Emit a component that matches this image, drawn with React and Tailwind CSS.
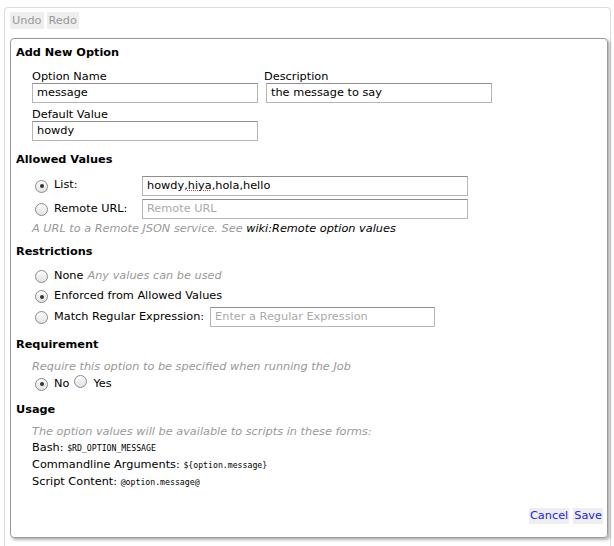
import React from 'react';

const font = { fontFamily: '"DejaVu Sans", Verdana, sans-serif' };
const mono = { fontFamily: '"DejaVu Sans Mono", monospace' };

function Radio({ checked }) {
  return (
    <span className="inline-flex items-center justify-center w-[13px] h-[13px] rounded-full border border-[#8a8a8a] bg-gradient-to-b from-[#fdfdfd] to-[#e2e2e2] shrink-0">
      {checked && <span className="w-[4px] h-[4px] rounded-full bg-[#333]" />}
    </span>
  );
}

function Field({ value, placeholder, w = 'w-[226px]' }) {
  return (
    <div className={`${w} h-[20px] border border-[#b5b5b5] border-t-[#8e8e8e] bg-white px-[4px] flex items-center ${value ? 'text-black' : 'text-[#aaa]'}`}>
      {value || placeholder}
    </div>
  );
}

function Heading({ children, className = '' }) {
  return <div className={`font-bold h-[16px] leading-[18px] ${className}`}>{children}</div>;
}

export default function App() {
  return (
    <div className="w-[614px] h-[546px] bg-white text-[11.3px] text-black overflow-hidden" style={font}>
      <div className="mt-[7px] ml-[4px] mr-[3px] h-[539px] border-l border-t border-r border-[#dcdcdc] rounded-t-[4px] pt-[4px] pl-[5px] pr-[2px]">
        <div className="flex gap-[3px]">
          <span className="h-[17px] leading-[17px] px-[2px] bg-[#eeeeee] text-[#999]">Undo</span>
          <span className="h-[17px] leading-[17px] px-[2px] bg-[#eeeeee] text-[#999]">Redo</span>
        </div>

        <div className="mt-[9px] h-[500px] border border-[#9a9a9a] rounded-[4px] shadow-[2px_2px_3px_rgba(0,0,0,0.3)] pt-[5px] pl-[5px] pr-[4px] flex flex-col">
          <Heading>Add New Option</Heading>
          <div className="pl-[16px] mt-[7px] flex gap-[8px]">
            <div>
              <div className="h-[16px] leading-[19px]">Option Name</div>
              <Field value="message" />
              <div className="h-[16px] leading-[19px] mt-[2px]">Default Value</div>
              <Field value="howdy" />
            </div>
            <div>
              <div className="h-[16px] leading-[19px] -ml-[2px]">Description</div>
              <Field value="the message to say" />
            </div>
          </div>

          <Heading className="mt-[10px]">Allowed Values</Heading>
          <div className="pl-[19px] mt-[9px] flex flex-col gap-[3px]">
            <div className="flex items-center h-[20px]">
              <Radio checked />
              <span className="ml-[6px] w-[88px] -mt-[2px]">List:</span>
              <Field w="w-[326px]" value={<span>howdy,<span className="underline decoration-dotted decoration-[#e33]">hiya</span>,hola,hello</span>} />
            </div>
            <div className="flex items-center h-[20px]">
              <Radio />
              <span className="ml-[6px] w-[88px]">Remote URL:</span>
              <Field w="w-[326px]" placeholder="Remote URL" />
            </div>
          </div>
          <div className="pl-[16px] h-[16px] leading-[18px] mt-[1px] italic text-[#999]">
            A URL to a Remote JSON service. See <span className="text-black">wiki:Remote option values</span>
          </div>

          <Heading className="mt-[7px]">Restrictions</Heading>
          <div className="pl-[19px] mt-[8px] flex flex-col gap-[1px]">
            <div className="flex items-center h-[19px]">
              <Radio />
              <span className="ml-[6px]">None</span>
              <span className="ml-[4px] italic text-[#999]">Any values can be used</span>
            </div>
            <div className="flex items-center h-[19px]">
              <Radio checked />
              <span className="ml-[6px]">Enforced from Allowed Values</span>
            </div>
            <div className="flex items-center h-[20px]">
              <Radio />
              <span className="ml-[6px]">Match Regular Expression:</span>
              <span className="ml-[6px]"><Field w="w-[225px]" placeholder="Enter a Regular Expression" /></span>
            </div>
          </div>

          <Heading className="mt-[9px]">Requirement</Heading>
          <div className="pl-[16px] mt-[7px] h-[16px] leading-[16px] italic text-[#999]">
            Require this option to be specified when running the Job
          </div>
          <div className="pl-[19px] flex items-center h-[18px]">
            <Radio checked />
            <span className="ml-[6px]">No</span>
            <span className="ml-[5px]"><Radio /></span>
            <span className="ml-[6px]">Yes</span>
          </div>

          <Heading className="mt-[8px]">Usage</Heading>
          <div className="pl-[16px] mt-[7px] flex flex-col">
            <div className="h-[15px] leading-[16px] italic text-[#999]">
              The option values will be available to scripts in these forms:
            </div>
            <div className="h-[17px] leading-[17px]">
              Bash: <span className="text-[8.2px]" style={mono}>$RD_OPTION_MESSAGE</span>
            </div>
            <div className="h-[17px] leading-[17px]">
              Commandline Arguments: <span className="text-[8.2px]" style={mono}>{'${option.message}'}</span>
            </div>
            <div className="h-[17px] leading-[17px]">
              Script Content: <span className="text-[8.2px]" style={mono}>@option.message@</span>
            </div>
          </div>

          <div className="mt-auto mb-[13px] flex justify-end gap-[4px]">
            <span className="h-[16px] leading-[16px] px-[1px] bg-[#eeeeee] text-[#2222ee]">Cancel</span>
            <span className="h-[16px] leading-[16px] px-[1px] bg-[#eeeeee] text-[#2222ee]">Save</span>
          </div>
        </div>
      </div>
    </div>
  );
}
